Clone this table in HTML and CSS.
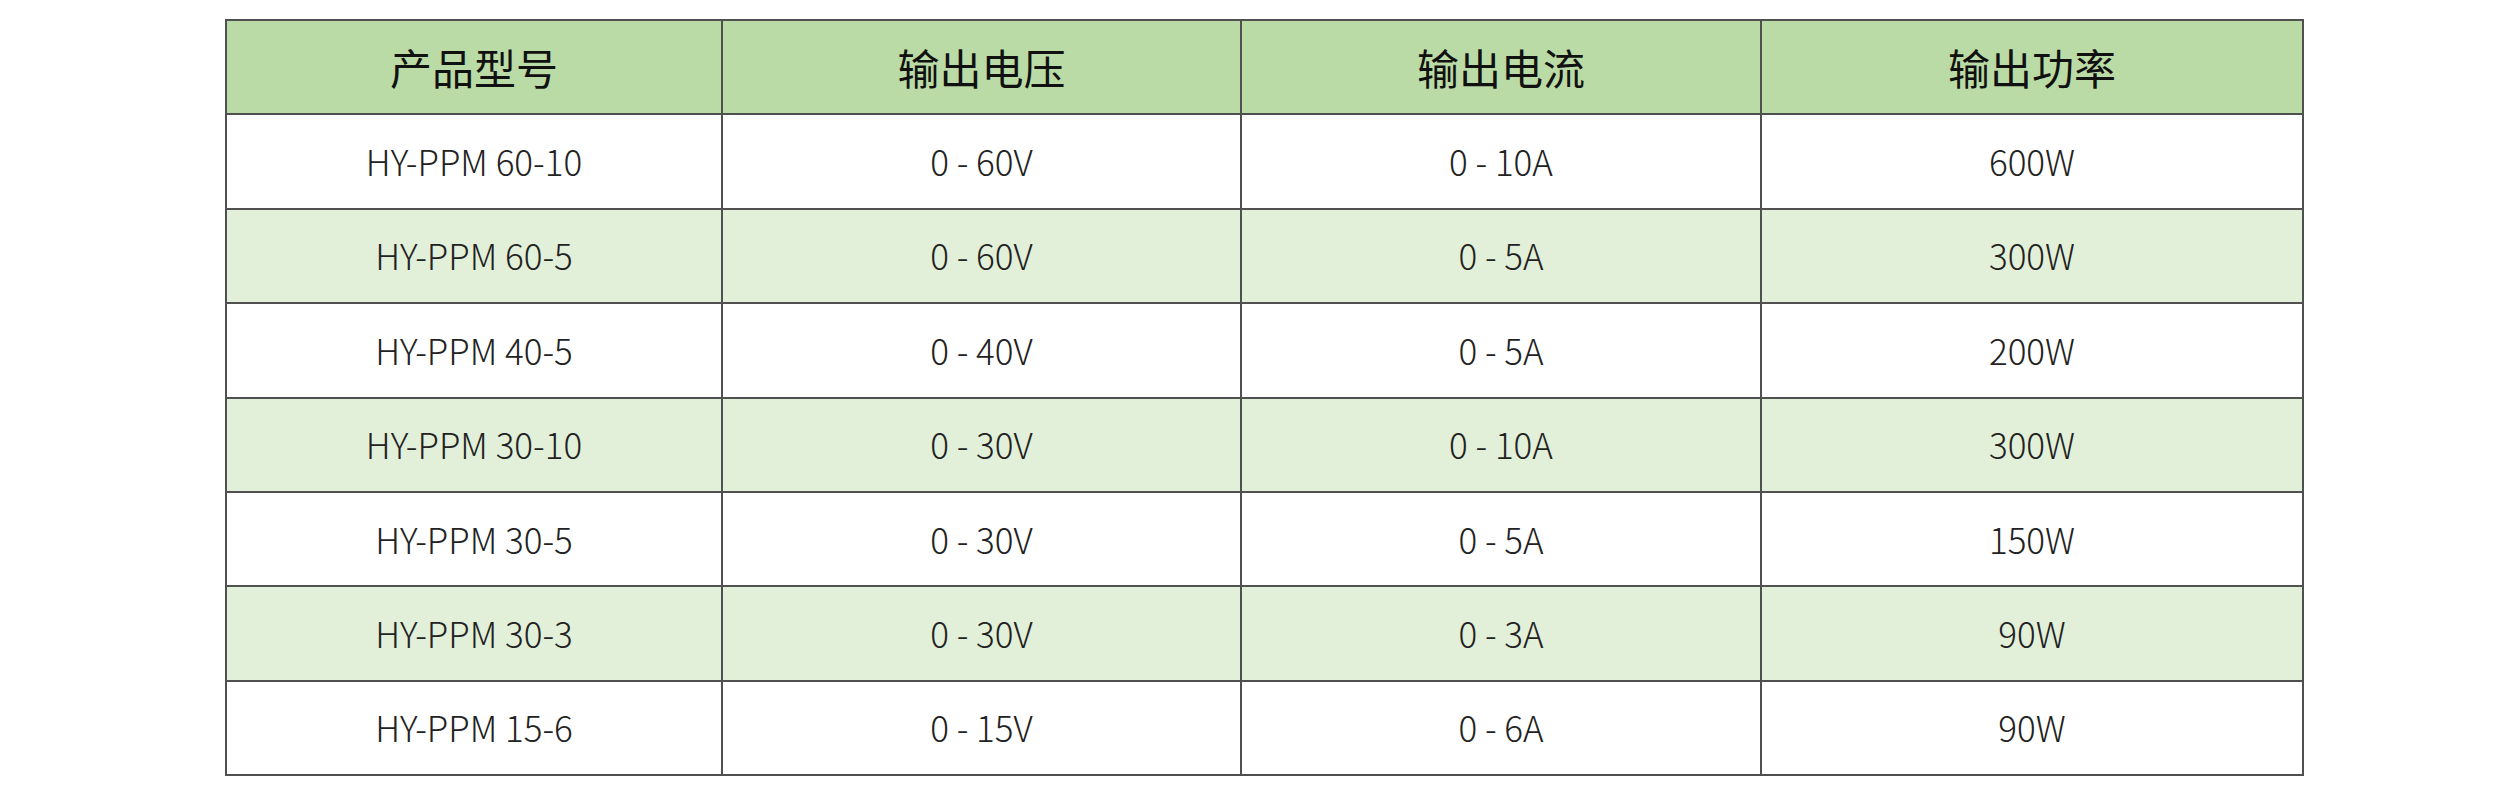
FILE: index.html
```html
<!DOCTYPE html>
<html lang="zh-CN">
<head>
<meta charset="utf-8">
<title>产品型号</title>
<link rel="stylesheet" href="styles.css">
</head>
<body>
<div class="page">
  <table class="spec">
    <colgroup>
      <col class="c1"><col class="c2"><col class="c3"><col class="c4">
    </colgroup>
    <thead>
      <tr><th>产品型号</th><th>输出电压</th><th>输出电流</th><th>输出功率</th></tr>
    </thead>
    <tbody>
      <tr><td>HY-PPM 60-10</td><td>0 - 60V</td><td>0 - 10A</td><td>600W</td></tr>
      <tr><td>HY-PPM 60-5</td><td>0 - 60V</td><td>0 - 5A</td><td>300W</td></tr>
      <tr><td>HY-PPM 40-5</td><td>0 - 40V</td><td>0 - 5A</td><td>200W</td></tr>
      <tr><td>HY-PPM 30-10</td><td>0 - 30V</td><td>0 - 10A</td><td>300W</td></tr>
      <tr><td>HY-PPM 30-5</td><td>0 - 30V</td><td>0 - 5A</td><td>150W</td></tr>
      <tr><td>HY-PPM 30-3</td><td>0 - 30V</td><td>0 - 3A</td><td>90W</td></tr>
      <tr><td>HY-PPM 15-6</td><td>0 - 15V</td><td>0 - 6A</td><td>90W</td></tr>
    </tbody>
  </table>
</div>
</body>
</html>
```
FILE: styles.css
```css
html, body {
  margin: 0;
  padding: 0;
  background: #ffffff;
}
.page {
  padding: 19px 0 0 225px;
}
.spec {
  border-collapse: collapse;
  table-layout: fixed;
  width: 2077px;
  font-family: "Noto Sans CJK SC", "Noto Sans", sans-serif;
  color: #222222;
}
.c1 { width: 496px; }
.c2 { width: 519px; }
.c3 { width: 520px; }
.c4 { width: 542px; }
.spec th,
.spec td {
  border: 2px solid #505050;
  text-align: center;
  vertical-align: middle;
  padding: 0 0 2px 0;
  height: 90.4px;
}
.spec th {
  background: #badba5;
  font-size: 42px;
  font-weight: 400;
  color: #111111;
}
.spec td {
  font-size: 35px;
  font-weight: 300;
  background: #ffffff;
}
.spec tbody tr:nth-child(even) td {
  background: #e2f0d9;
}
```
